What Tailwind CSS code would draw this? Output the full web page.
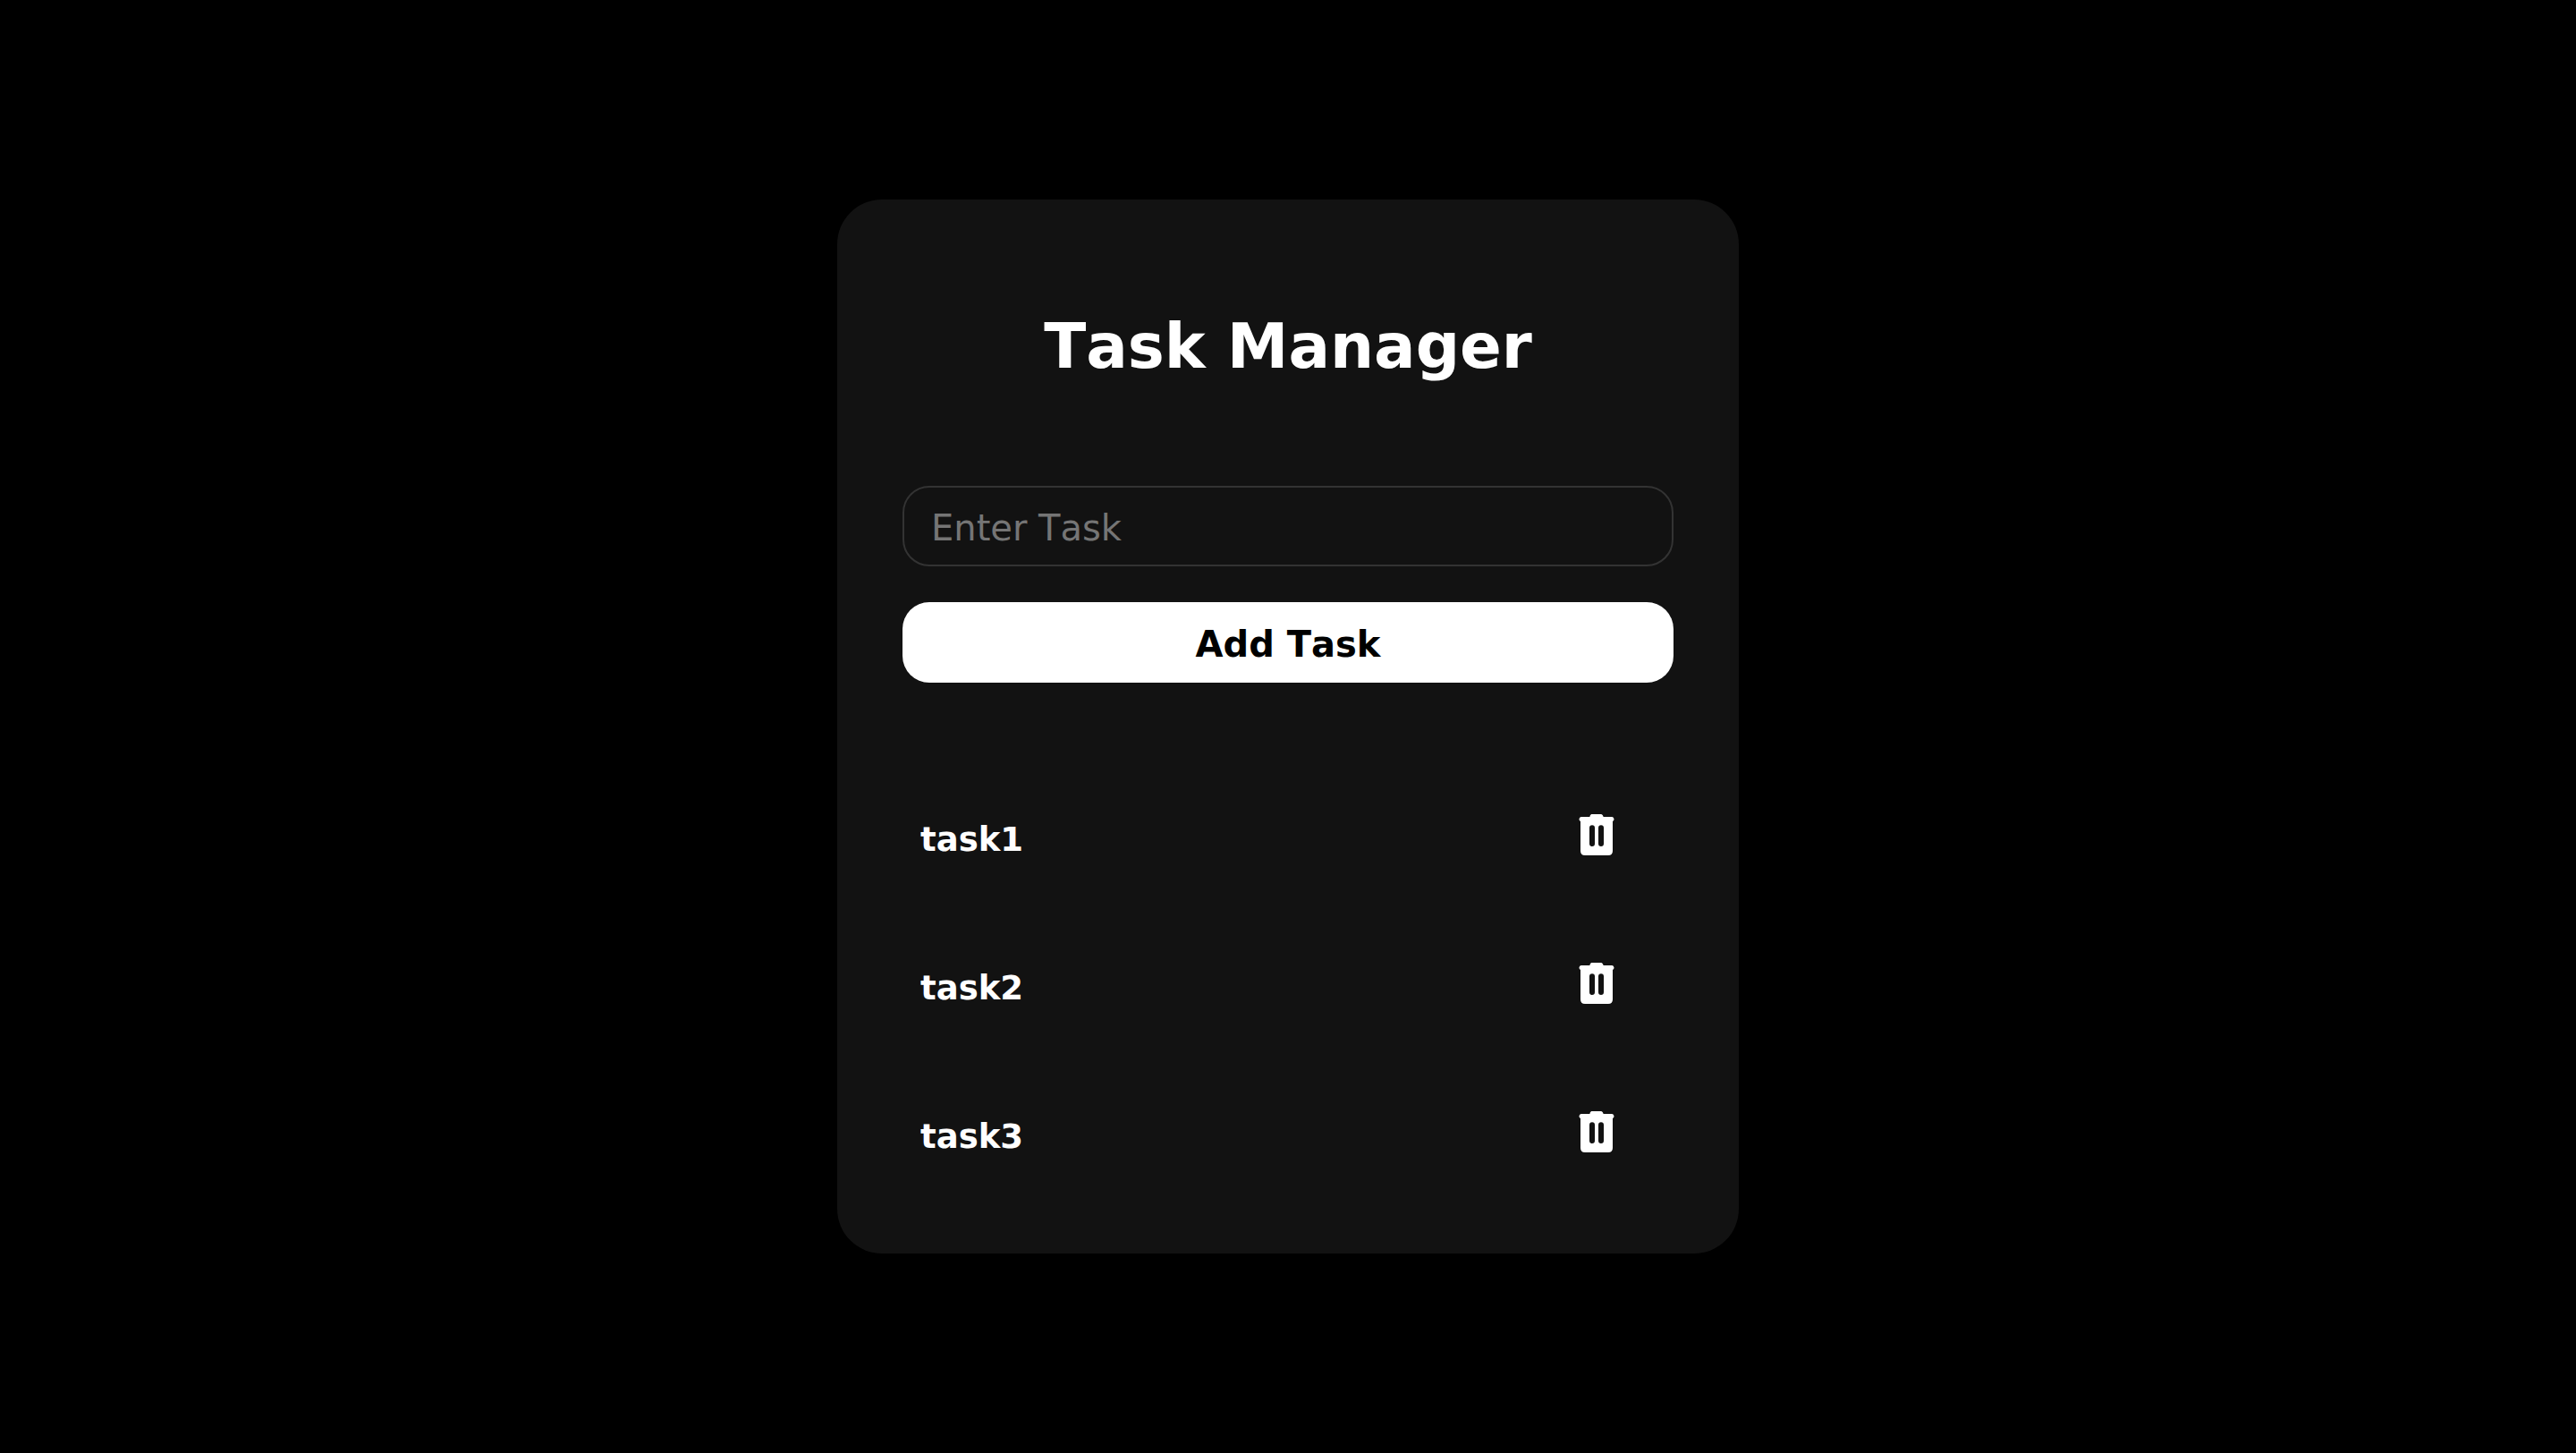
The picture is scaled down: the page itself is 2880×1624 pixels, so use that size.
<!DOCTYPE html>
<html lang="en">
<head>
<meta charset="utf-8">
<title>Task Manager</title>
<script src="https://cdn.jsdelivr.net/npm/@tailwindcss/browser@4"></script>
</head>
<body class="flex min-h-screen items-center justify-center bg-black font-[Verdana,'DejaVu_Sans',sans-serif] text-white [font-kerning:none]">
<svg class="hidden" aria-hidden="true">
  <symbol id="trash" viewBox="0 0 120 138">
    <path fill="currentColor" fill-rule="evenodd" d="M43 0H76Q81 1 83 9H112A8 8 0 0 1 114 24V123Q114 138 99 138H21Q6 138 6 123V24A8 8 0 0 1 8 9H37Q38 1 43 0ZM36 46V99A9 9 0 0 0 54 99V46A9 9 0 0 0 36 46ZM66 46V99A9 9 0 0 0 84 99V46A9 9 0 0 0 66 46Z"/>
  </symbol>
</svg>
<main class="w-[35%] rounded-[50px] bg-[#121212] px-[73px] pt-[123px] pb-[49px]">
  <h1 class="text-center text-[69px] leading-[82px] font-bold">Task Manager</h1>
  <form class="mt-[115px] flex flex-col gap-10">
    <input type="text" aria-label="Enter Task" placeholder="Enter Task" class="h-[90px] w-full rounded-[30px] border-2 border-[#333] bg-transparent px-[30px] pt-1 text-[40px] outline-none placeholder:text-[#757575] [font-kerning:none]">
    <button type="button" class="h-[90px] w-full rounded-[30px] bg-white pt-1 text-[40px] font-bold text-black [font-kerning:none]">Add Task</button>
  </form>
  <ul class="mt-[91px]">
    <li class="flex h-[166px] items-center justify-between pr-[66px] pl-5">
      <span class="pt-1 text-[37px] font-bold">task1</span>
      <button type="button" aria-label="Delete task1" class="pb-2"><svg class="h-[46px] w-10"><use href="#trash"/></svg></button>
    </li>
    <li class="flex h-[166px] items-center justify-between pr-[66px] pl-5">
      <span class="pt-1 text-[37px] font-bold">task2</span>
      <button type="button" aria-label="Delete task2" class="pb-2"><svg class="h-[46px] w-10"><use href="#trash"/></svg></button>
    </li>
    <li class="flex h-[166px] items-center justify-between pr-[66px] pl-5">
      <span class="pt-1 text-[37px] font-bold">task3</span>
      <button type="button" aria-label="Delete task3" class="pb-2"><svg class="h-[46px] w-10"><use href="#trash"/></svg></button>
    </li>
  </ul>
</main>
</body>
</html>
